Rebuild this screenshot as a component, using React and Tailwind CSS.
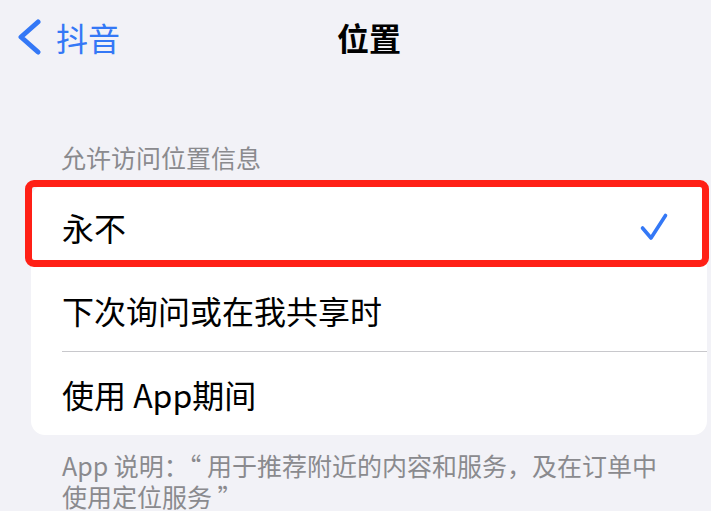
const options = [
  { label: "永不", checked: true },
  { label: "下次询问或在我共享时", checked: false },
  { label: "使用 App期间", checked: false },
];

const App = () => {
  return (
    <div className="min-h-[511px] w-full bg-[#f2f2f7] font-['Noto_Sans_CJK_SC',sans-serif] text-black">
      {/* nav bar */}
      <div className="flex h-[74px] items-center pl-[16px]">
        <svg width="26" height="36" viewBox="0 0 26 36" fill="none">
          <path
            d="M22 3L5 18l17 15"
            stroke="#3478f6"
            strokeWidth="5"
            strokeLinecap="round"
            strokeLinejoin="round"
          />
        </svg>
        <span className="ml-[14px] text-[32px] leading-none text-[#3478f6]">抖音</span>
        <span className="ml-[217px] text-[32px] font-bold leading-none">位置</span>
      </div>

      {/* section header */}
      <div className="mt-[68px] pl-[61px] text-[25px] leading-[30px] text-[#8a8a8e]">
        允许访问位置信息
      </div>

      {/* options card */}
      <div className="ml-[31px] mr-[4px] mt-[13px] rounded-[14px] bg-white">
        {options.map((opt, i) => (
          <div key={i}>
            {i > 1 && <div className="ml-[31px] h-px bg-[#c8c8cc]"></div>}
            <div className="relative flex h-[83px] items-center justify-between pl-[31px] pr-[37px]">
              <span className="text-[32px] leading-none">{opt.label}</span>
              {opt.checked && (
                <svg width="32" height="32" viewBox="0 0 32 32" fill="none">
                  <path
                    d="M4.5 17L13 27L27.5 4.5"
                    stroke="#3478f6"
                    strokeWidth="3.6"
                    strokeLinecap="round"
                    strokeLinejoin="round"
                  />
                </svg>
              )}
              {/* red highlight */}
              {opt.checked && (
                <div className="absolute -left-[6px] -right-[2px] -top-[5px] bottom-[1px] rounded-[9px] border-[7px] border-[#ff2016]"></div>
              )}
            </div>
          </div>
        ))}
      </div>

      {/* footer */}
      <div className="mt-[15px] pl-[62px] text-[25px] leading-[31px] text-[#8a8a8e]">
        App 说明：“ 用于推荐附近的内容和服务，及在订单中
        <br />
        使用定位服务 ”
      </div>
    </div>
  );
};

export default App;
